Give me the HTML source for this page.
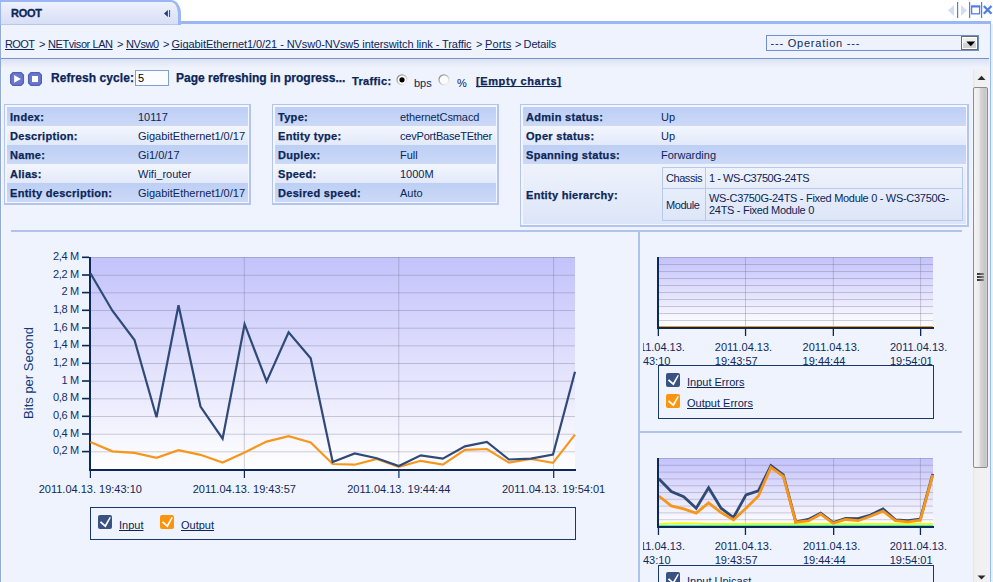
<!DOCTYPE html>
<html><head><meta charset="utf-8">
<style>
*{margin:0;padding:0;box-sizing:border-box}
html,body{width:993px;height:582px;overflow:hidden;background:#fff}
body{position:relative;font-family:"Liberation Sans",sans-serif;font-size:11px;color:#0b2658}
.a{position:absolute;white-space:nowrap}
.u{text-decoration:underline;text-decoration-skip-ink:none}
#panel{position:absolute;left:0;top:21px;width:991px;height:561px;border-top:3px solid #9bb7f3;border-left:1px solid #8fa8d8;border-right:1px solid #99b8fa;background:#eff3fd}
#tab{position:absolute;left:0;top:0;width:181px;height:25px;border-top:2px solid #9bb7f3;border-left:1px solid #9bb7f3;border-right:3px solid #9bb7f3;border-top-right-radius:10px 14px;background:linear-gradient(#eef2fc,#d6def6);z-index:2}
#tab:after{content:"";position:absolute;left:0;right:0;bottom:0;height:1px;background:#b7c8ee}
table.info{position:absolute;border-collapse:separate;border-spacing:0;border-top:1px solid #b3c5ee;border-left:1px solid #b3c5ee;border-right:2px solid #b3c5ee;border-bottom:2px solid #b3c5ee;padding:2px 1px 1px 2px;background:#f3f6fe}
table.info td{height:19px;padding:0 0 0 3px;vertical-align:middle;white-space:nowrap}
table.info td.l{font-weight:bold;letter-spacing:0.3px;-webkit-text-stroke:0.25px #0b2658}
table.info tr.d td{background:linear-gradient(#bdcff5,#ccd9f7)}
table.info tr.e td{background:linear-gradient(#f3f6fe,#e2e9fa)}
table.info tr.f td{background:linear-gradient(#eef2fc,#dce5f8)}
.hl{position:absolute;background:#b0c3ec}

.yl{font-family:"Liberation Sans",sans-serif;font-size:11px;fill:#10306a;letter-spacing:-0.35px}
.xl{font-family:"Liberation Sans",sans-serif;font-size:11px;fill:#0f2a5c}
.yt{font-family:"Liberation Sans",sans-serif;font-size:13px;fill:#0f3a7a}
.leg{position:absolute;border:1px solid #16386c}
.cb{position:absolute;width:14px;height:14px;border-radius:2px}
.cb svg{position:absolute;left:1px;top:1px}
</style></head><body>
<div id="tab">
  <div class="a" style="left:10px;top:5px;font-weight:bold;font-size:11px;color:#0b2658;letter-spacing:-0.3px;-webkit-text-stroke:0.3px #0b2658">ROOT</div>
  <svg class="a" style="left:162px;top:7px" width="8" height="9" viewBox="0 0 8 9"><path d="M1 4.5 L4.9 1 L4.9 8 Z" fill="#1d3f7c"/><rect x="6" y="1" width="1.1" height="7" fill="#3a5a90"/></svg>
</div>
<div id="panel"></div>
<div class="a" style="left:1px;top:24px;width:1px;height:558px;background:#f7f9fe"></div>
<div class="a" style="left:991px;top:24px;width:2px;height:558px;background:#edf1f8"></div>

<!-- window controls -->
<svg class="a" style="left:946px;top:1px" width="47" height="18" viewBox="0 0 47 18">
  <path d="M2 9.5 L8 4 L8 15 Z" fill="#d0ddf8"/>
  <rect x="11" y="1" width="1.2" height="16" fill="#4f7fe6"/>
  <path d="M15 4 L21 9.5 L15 15 Z" fill="#d0ddf8"/>
  <rect x="23" y="1" width="1.2" height="16" fill="#4f7fe6"/>
  <rect x="25.6" y="5.2" width="8" height="7.6" fill="none" stroke="#4f7fe6" stroke-width="1.3"/><rect x="25" y="4.5" width="9.2" height="2" fill="#4f7fe6"/>
  <rect x="35" y="1" width="1.2" height="16" fill="#4f7fe6"/>
  <path d="M37.8 5 L45.5 12.8 M45.5 5 L37.8 12.8" stroke="#4f7fe6" stroke-width="2.3"/>
</svg>

<!-- breadcrumb -->
<div class="a u" style="left:5px;top:38px;letter-spacing:-0.6px">ROOT</div>
<div class="a" style="left:39px;top:38px;letter-spacing:-0.5px">&gt;</div>
<div class="a u" style="left:48px;top:38px;letter-spacing:-0.42px">NETvisor LAN</div>
<div class="a" style="left:117px;top:38px;letter-spacing:-0.5px">&gt;</div>
<div class="a u" style="left:126px;top:38px;letter-spacing:-0.42px">NVsw0</div>
<div class="a" style="left:163px;top:38px;letter-spacing:-0.5px">&gt;</div>
<div class="a u" style="left:171.6px;top:38px;letter-spacing:-0.07px">GigabitEthernet1/0/21 - NVsw0-NVsw5 interswitch link - Traffic</div>
<div class="a" style="left:476px;top:38px;letter-spacing:-0.5px">&gt;</div>
<div class="a u" style="left:485px;top:38px;letter-spacing:0.15px">Ports</div>
<div class="a" style="left:515px;top:38px;letter-spacing:-0.5px">&gt;</div>
<div class="a" style="left:523.6px;top:38px;letter-spacing:-0.15px">Details</div>

<!-- select -->
<div class="a" style="left:766px;top:35px;width:213px;height:16px;border:1px solid #6f8fd0;background:#eef2fc">
  <div class="a" style="left:3.5px;top:1px;font-size:11px;letter-spacing:0.78px;color:#0f2a5c">--- Operation ---</div>
  <div class="a" style="left:194px;top:0px;width:17px;height:14px;border:1px solid #6a6a6a;background:#fff">
    <div class="a" style="left:1px;top:1px;width:13px;height:10px;background:linear-gradient(#f0f0f0 0,#ececec 45%,#d4d4d4 46%,#d0d0d0)"></div>
    <svg class="a" style="left:3.5px;top:4px" width="10" height="6"><path d="M0.3 0.5 L9.2 0.5 L4.75 5.2 Z" fill="#000"/></svg>
  </div>
</div>

<div class="hl" style="left:1px;top:58px;width:988px;height:1px;background:#7a92cc"></div>
<div class="a" style="left:1px;top:59px;width:988px;height:9px;background:linear-gradient(#dbe2f1,#eff3fd)"></div>

<!-- toolbar -->
<svg class="a" style="left:10px;top:72px" width="32" height="14" viewBox="0 0 32 14">
  <path d="M3 0.6 H11 L13.4 3 V11 L11 13.4 H3 L0.6 11 V3 Z" fill="#6a76c8" stroke="#5060bf" stroke-width="1.3"/>
  <path d="M4.1 3 L10.9 7 L4.1 10.7 Z" fill="#fff"/>
  <path d="M21 0.6 H29 L31.4 3 V11 L29 13.4 H21 L18.6 11 V3 Z" fill="#6a76c8" stroke="#5060bf" stroke-width="1.3"/>
  <rect x="22" y="4" width="6" height="6" fill="#fff"/>
</svg>
<div class="a" style="left:51px;top:71px;font-size:12px;font-weight:bold;letter-spacing:0.07px;-webkit-text-stroke:0.25px #0b2658">Refresh cycle:</div>
<div class="a" style="left:135px;top:70px;width:34px;height:16px;border:1px solid #7f9dd8;background:#fbfcff"><div class="a" style="left:2px;top:1px;font-size:11px;color:#000">5</div></div>
<div class="a" style="left:176px;top:71px;font-size:12px;font-weight:bold;letter-spacing:0px;-webkit-text-stroke:0.25px #0b2658">Page refreshing in progress...</div>
<div class="a" style="left:352px;top:75px;font-size:11px;font-weight:bold;letter-spacing:0.35px;-webkit-text-stroke:0.25px #0b2658">Traffic:</div>
<svg class="a" style="left:396px;top:74px" width="12" height="12" viewBox="0 0 12 12"><defs><linearGradient id="rg" x1="0" y1="0" x2="1" y2="1"><stop offset="0" stop-color="#7a7a7a"/><stop offset="0.55" stop-color="#c8c8c8"/><stop offset="1" stop-color="#ffffff"/></linearGradient></defs><circle cx="6" cy="5.8" r="5" fill="#fbfbfb" stroke="url(#rg)" stroke-width="1.2"/><circle cx="6" cy="5.8" r="2.6" fill="#000"/></svg>
<div class="a" style="left:414px;top:77px;font-size:11px">bps</div>
<svg class="a" style="left:438px;top:74px" width="12" height="12" viewBox="0 0 12 12"><circle cx="6" cy="5.8" r="5" fill="#fbfbfb" stroke="url(#rg)" stroke-width="1.2"/></svg>
<div class="a" style="left:457px;top:77px;font-size:11px">%</div>
<div class="a" style="left:476px;top:75px;font-size:11px;font-weight:bold;letter-spacing:0.6px;-webkit-text-stroke:0.25px #0b2658;text-decoration:underline;text-decoration-skip-ink:none">[Empty charts]</div>

<!-- info tables -->
<table class="info" style="left:4px;top:104px;width:247px">
<tr class="d"><td class="l" style="width:128px">Index:</td><td>10117</td></tr>
<tr class="e"><td class="l">Description:</td><td>GigabitEthernet1/0/17</td></tr>
<tr class="d"><td class="l">Name:</td><td>Gi1/0/17</td></tr>
<tr class="e"><td class="l">Alias:</td><td>Wifi_router</td></tr>
<tr class="d"><td class="l">Entity description:</td><td>GigabitEthernet1/0/17</td></tr>
</table>
<table class="info" style="left:272px;top:104px;width:227px">
<tr class="d"><td class="l" style="width:122px">Type:</td><td style="letter-spacing:-0.1px">ethernetCsmacd</td></tr>
<tr class="e"><td class="l">Entity type:</td><td style="letter-spacing:-0.2px">cevPortBaseTEther</td></tr>
<tr class="d"><td class="l">Duplex:</td><td>Full</td></tr>
<tr class="e"><td class="l">Speed:</td><td>1000M</td></tr>
<tr class="d"><td class="l">Desired speed:</td><td>Auto</td></tr>
</table>
<table class="info" style="left:520px;top:104px;width:449px">
<tr class="d"><td class="l" style="width:135px">Admin status:</td><td>Up</td></tr>
<tr class="e"><td class="l">Oper status:</td><td>Up</td></tr>
<tr class="d"><td class="l">Spanning status:</td><td>Forwarding</td></tr>
<tr class="f"><td class="l" style="height:60px;padding-top:2px">Entity hierarchy:</td><td></td></tr>
</table>
<div class="a" style="left:662px;top:167px;width:301px;height:54px;border:1px solid #b7c9ee;background:linear-gradient(#eef2fc,#dde6f8)">
  <div class="a" style="left:42px;top:0;width:1px;height:52px;background:#b7c9ee"></div>
  <div class="a" style="left:0;top:20px;width:299px;height:1px;background:#b7c9ee"></div>
  <div class="a" style="left:3px;top:4px;letter-spacing:-0.45px">Chassis</div>
  <div class="a" style="left:46px;top:4px;letter-spacing:-0.45px">1 - WS-C3750G-24TS</div>
  <div class="a" style="left:3px;top:31px;letter-spacing:-0.45px">Module</div>
  <div class="a" style="left:46px;top:24px;letter-spacing:-0.3px">WS-C3750G-24TS - Fixed Module 0 - WS-C3750G-</div>
  <div class="a" style="left:46px;top:36px;letter-spacing:-0.3px">24TS - Fixed Module 0</div>
</div>

<div class="hl" style="left:11px;top:230px;width:951px;height:2px"></div>
<div class="hl" style="left:638px;top:232px;width:2px;height:350px"></div>
<div class="hl" style="left:640px;top:431px;width:322px;height:2px"></div>


<svg class="a" style="left:0;top:232px" width="638" height="350" viewBox="0 232 638 350">
<defs><linearGradient id="pg" x1="0" y1="0" x2="0" y2="1"><stop offset="0" stop-color="#c3c2fb"/><stop offset="1" stop-color="#ffffff"/></linearGradient></defs>
<rect x="90" y="257" width="485" height="212" fill="url(#pg)"/>
<rect x="90" y="257" width="485" height="1" fill="#6e6a86" fill-opacity="0.32"/>
<rect x="90" y="274.7" width="485" height="1" fill="#6e6a86" fill-opacity="0.32"/>
<rect x="90" y="292.3" width="485" height="1" fill="#6e6a86" fill-opacity="0.32"/>
<rect x="90" y="310" width="485" height="1" fill="#6e6a86" fill-opacity="0.32"/>
<rect x="90" y="327.7" width="485" height="1" fill="#6e6a86" fill-opacity="0.32"/>
<rect x="90" y="345.3" width="485" height="1" fill="#6e6a86" fill-opacity="0.32"/>
<rect x="90" y="363" width="485" height="1" fill="#6e6a86" fill-opacity="0.32"/>
<rect x="90" y="380.7" width="485" height="1" fill="#6e6a86" fill-opacity="0.32"/>
<rect x="90" y="398.3" width="485" height="1" fill="#6e6a86" fill-opacity="0.32"/>
<rect x="90" y="416" width="485" height="1" fill="#6e6a86" fill-opacity="0.32"/>
<rect x="90" y="433.7" width="485" height="1" fill="#6e6a86" fill-opacity="0.32"/>
<rect x="90" y="451.3" width="485" height="1" fill="#6e6a86" fill-opacity="0.32"/>
<rect x="243.8" y="257" width="1" height="212" fill="#6e6a86" fill-opacity="0.32"/>
<rect x="398.3" y="257" width="1" height="212" fill="#6e6a86" fill-opacity="0.32"/>
<rect x="553.1" y="257" width="1" height="212" fill="#6e6a86" fill-opacity="0.32"/>
<rect x="89" y="257" width="2" height="214" fill="#0c2858"/>
<rect x="89" y="469" width="487" height="2" fill="#0c2858"/>
<rect x="82" y="256.5" width="7" height="1.6" fill="#0c2858"/>
<text x="78.8" y="260" text-anchor="end" class="yl">2,4 M</text>
<rect x="82" y="274.2" width="7" height="1.6" fill="#0c2858"/>
<text x="78.8" y="277.7" text-anchor="end" class="yl">2,2 M</text>
<rect x="82" y="291.8" width="7" height="1.6" fill="#0c2858"/>
<text x="78.8" y="295.3" text-anchor="end" class="yl">2 M</text>
<rect x="82" y="309.5" width="7" height="1.6" fill="#0c2858"/>
<text x="78.8" y="313" text-anchor="end" class="yl">1,8 M</text>
<rect x="82" y="327.2" width="7" height="1.6" fill="#0c2858"/>
<text x="78.8" y="330.7" text-anchor="end" class="yl">1,6 M</text>
<rect x="82" y="344.8" width="7" height="1.6" fill="#0c2858"/>
<text x="78.8" y="348.3" text-anchor="end" class="yl">1,4 M</text>
<rect x="82" y="362.5" width="7" height="1.6" fill="#0c2858"/>
<text x="78.8" y="366" text-anchor="end" class="yl">1,2 M</text>
<rect x="82" y="380.2" width="7" height="1.6" fill="#0c2858"/>
<text x="78.8" y="383.7" text-anchor="end" class="yl">1 M</text>
<rect x="82" y="397.8" width="7" height="1.6" fill="#0c2858"/>
<text x="78.8" y="401.3" text-anchor="end" class="yl">0,8 M</text>
<rect x="82" y="415.5" width="7" height="1.6" fill="#0c2858"/>
<text x="78.8" y="419" text-anchor="end" class="yl">0,6 M</text>
<rect x="82" y="433.2" width="7" height="1.6" fill="#0c2858"/>
<text x="78.8" y="436.7" text-anchor="end" class="yl">0,4 M</text>
<rect x="82" y="450.8" width="7" height="1.6" fill="#0c2858"/>
<text x="78.8" y="454.3" text-anchor="end" class="yl">0,2 M</text>
<rect x="89.8" y="471" width="1.2" height="7" fill="#0c2858"/>
<text x="90.3" y="492.8" text-anchor="middle" class="xl">2011.04.13. 19:43:10</text>
<rect x="243.8" y="471" width="1.2" height="7" fill="#0c2858"/>
<text x="244.3" y="492.8" text-anchor="middle" class="xl">2011.04.13. 19:43:57</text>
<rect x="398.3" y="471" width="1.2" height="7" fill="#0c2858"/>
<text x="398.8" y="492.8" text-anchor="middle" class="xl">2011.04.13. 19:44:44</text>
<rect x="553.1" y="471" width="1.2" height="7" fill="#0c2858"/>
<text x="553.6" y="492.8" text-anchor="middle" class="xl">2011.04.13. 19:54:01</text>
<polyline points="90.4,442 112.4,451.3 134.5,452.9 156.5,457.9 178.5,450.2 200.5,454.8 222.6,462.5 244.6,452.5 266.6,441.6 288.6,436.2 310.7,442.4 332.7,464 354.7,464.7 376.8,459 398.8,466.8 420.8,460.8 442.8,464.7 464.9,449.8 486.9,449 508.9,462.6 530.9,459 553,462.9 575,434.6" fill="none" stroke="#f7961c" stroke-width="2.2" stroke-linejoin="miter"/>
<polyline points="90.4,273.2 112.4,310.7 134.5,340 156.5,417.3 178.5,305.3 200.5,406.5 222.6,438.6 244.6,324.2 266.6,381.4 288.6,332.3 310.7,358.2 332.7,462 354.7,453.5 376.8,458.2 398.8,466 420.8,455.3 442.8,458.7 464.9,446.4 486.9,442 508.9,459.5 530.9,458.7 553,454.5 575,371.8" fill="none" stroke="#2f4a78" stroke-width="2.2" stroke-linejoin="miter"/>
<text x="33" y="373" transform="rotate(-90 33 373)" text-anchor="middle" class="yt">Bits per Second</text>
</svg>
<div class="leg" style="left:90px;top:507px;width:486px;height:33px"></div>
<div class="cb" style="left:98px;top:515px;background:#3a5282"><svg width="12" height="12" viewBox="0 0 12 12"><path d="M0.8 6.6 L2.1 5.2 L6 8.7 L10.7 0.9 L11.9 1.6 L6.6 11.4 Z" fill="#fff"/></svg></div>
<div class="a u" style="left:119px;top:519px">Input</div>
<div class="cb" style="left:160px;top:515px;background:#fd940d"><svg width="12" height="12" viewBox="0 0 12 12"><path d="M0.8 6.6 L2.1 5.2 L6 8.7 L10.7 0.9 L11.9 1.6 L6.6 11.4 Z" fill="#fff"/></svg></div>
<div class="a u" style="left:181px;top:519px">Output</div>

<div class="a" style="left:641px;top:232px;width:330px;height:350px;overflow:hidden">
</div>
<svg class="a" style="left:643px;top:232px" width="329" height="350" viewBox="643 232 329 350">
<defs><linearGradient id="pg2" x1="0" y1="0" x2="0" y2="1"><stop offset="0" stop-color="#c3c2fb"/><stop offset="1" stop-color="#ffffff"/></linearGradient></defs>
<rect x="657" y="257" width="276" height="70" fill="url(#pg2)"/>
<rect x="657" y="257" width="276" height="1" fill="#6e6a86" fill-opacity="0.32"/>
<rect x="657" y="264" width="276" height="1" fill="#6e6a86" fill-opacity="0.32"/>
<rect x="657" y="271" width="276" height="1" fill="#6e6a86" fill-opacity="0.32"/>
<rect x="657" y="278" width="276" height="1" fill="#6e6a86" fill-opacity="0.32"/>
<rect x="657" y="285" width="276" height="1" fill="#6e6a86" fill-opacity="0.32"/>
<rect x="657" y="292" width="276" height="1" fill="#6e6a86" fill-opacity="0.32"/>
<rect x="657" y="299" width="276" height="1" fill="#6e6a86" fill-opacity="0.32"/>
<rect x="657" y="306" width="276" height="1" fill="#6e6a86" fill-opacity="0.32"/>
<rect x="657" y="313" width="276" height="1" fill="#6e6a86" fill-opacity="0.32"/>
<rect x="657" y="320" width="276" height="1" fill="#6e6a86" fill-opacity="0.32"/>
<rect x="745" y="257" width="1" height="70" fill="#6e6a86" fill-opacity="0.32"/>
<rect x="832.8" y="257" width="1" height="70" fill="#6e6a86" fill-opacity="0.32"/>
<rect x="920.1" y="257" width="1" height="70" fill="#6e6a86" fill-opacity="0.32"/>
<polyline points="658.8,326.6 671.3,326.6 683.7,326.6 696.2,326.6 708.6,326.6 721.1,326.6 733.5,326.6 746,326.6 758.4,326.6 770.9,326.6 783.3,326.6 795.8,326.6 808.3,326.6 820.7,326.6 833.2,326.6 845.6,326.6 858.1,326.6 870.5,326.6 883,326.6 895.4,326.6 907.9,326.6 920.3,326.6 932.8,326.6" fill="none" stroke="#f7961c" stroke-width="1.4"/>
<rect x="657" y="257" width="2" height="72" fill="#0c2858"/>
<rect x="657" y="327" width="277" height="2" fill="#0c2858"/>
<rect x="657.7" y="329" width="1.3" height="7" fill="#0c2858"/>
<text x="627.6" y="350.6" class="xl">2011.04.13.</text>
<text x="627.6" y="365" class="xl">19:43:10</text>
<rect x="744.9" y="329" width="1.3" height="7" fill="#0c2858"/>
<text x="714.8" y="350.6" class="xl">2011.04.13.</text>
<text x="714.8" y="365" class="xl">19:43:57</text>
<rect x="832.7" y="329" width="1.3" height="7" fill="#0c2858"/>
<text x="802.6" y="350.6" class="xl">2011.04.13.</text>
<text x="802.6" y="365" class="xl">19:44:44</text>
<rect x="920" y="329" width="1.3" height="7" fill="#0c2858"/>
<text x="889.9" y="350.6" class="xl">2011.04.13.</text>
<text x="889.9" y="365" class="xl">19:54:01</text>
<rect x="657" y="458" width="276" height="68" fill="url(#pg2)"/>
<rect x="657" y="458" width="276" height="1" fill="#6e6a86" fill-opacity="0.32"/>
<rect x="657" y="464.8" width="276" height="1" fill="#6e6a86" fill-opacity="0.32"/>
<rect x="657" y="471.6" width="276" height="1" fill="#6e6a86" fill-opacity="0.32"/>
<rect x="657" y="478.4" width="276" height="1" fill="#6e6a86" fill-opacity="0.32"/>
<rect x="657" y="485.2" width="276" height="1" fill="#6e6a86" fill-opacity="0.32"/>
<rect x="657" y="492" width="276" height="1" fill="#6e6a86" fill-opacity="0.32"/>
<rect x="657" y="498.8" width="276" height="1" fill="#6e6a86" fill-opacity="0.32"/>
<rect x="657" y="505.6" width="276" height="1" fill="#6e6a86" fill-opacity="0.32"/>
<rect x="657" y="512.4" width="276" height="1" fill="#6e6a86" fill-opacity="0.32"/>
<rect x="657" y="519.2" width="276" height="1" fill="#6e6a86" fill-opacity="0.32"/>
<rect x="744.9" y="458" width="1" height="68" fill="#6e6a86" fill-opacity="0.32"/>
<rect x="833.1" y="458" width="1" height="68" fill="#6e6a86" fill-opacity="0.32"/>
<rect x="919.9" y="458" width="1" height="68" fill="#6e6a86" fill-opacity="0.32"/>
<polyline points="658.8,525.6 671.3,525.6 683.7,525.6 696.2,525.6 708.6,525.6 721.1,525.6 733.5,525.6 746,525.6 758.4,525.6 770.9,525.6 783.3,525.6 795.8,525.6 808.3,525.6 820.7,525.6 833.2,525.6 845.6,525.6 858.1,525.6 870.5,525.6 883,525.6 895.4,525.6 907.9,525.6 920.3,525.6 932.8,525.6" fill="none" stroke="#20f0f0" stroke-width="1.2"/>
<polyline points="658.8,524 671.3,523.6 683.7,523.2 696.2,523.6 708.6,524 721.1,524 733.5,524 746,524 758.4,524 770.9,524 783.3,524 795.8,524 808.3,524 820.7,524 833.2,524 845.6,524 858.1,524 870.5,524 883,524 895.4,524 907.9,524 920.3,524 932.8,524" fill="none" stroke="#f8f800" stroke-width="2"/>
<polyline points="658.8,478.7 671.3,491.5 683.7,496.8 696.2,508.2 708.6,487.8 721.1,508.2 733.5,517.5 746,494.9 758.4,490.8 770.9,465.6 783.3,474.9 795.8,521.8 808.3,519.5 820.7,513.1 833.2,522.5 845.6,518.3 858.1,518.7 870.5,515 883,508.9 895.4,519.8 907.9,520.7 920.3,519.2 932.8,473.9" fill="none" stroke="#2f4a78" stroke-width="2.8"/>
<polyline points="658.8,496 671.3,505.9 683.7,508.9 696.2,513.1 708.6,502.9 721.1,512.7 733.5,519.8 746,508.2 758.4,496 770.9,467.4 783.3,476.4 795.8,522.2 808.3,521 820.7,514.2 833.2,523.3 845.6,519.5 858.1,520.7 870.5,516.2 883,511.2 895.4,520.7 907.9,521.8 920.3,520.2 932.8,474.9" fill="none" stroke="#f7961c" stroke-width="2.8"/>
<rect x="657" y="458" width="2" height="70" fill="#0c2858"/>
<rect x="657" y="526" width="277" height="2" fill="#0c2858"/>
<rect x="657.8" y="528" width="1.3" height="7" fill="#0c2858"/>
<text x="627.7" y="549.6" class="xl">2011.04.13.</text>
<text x="627.7" y="564" class="xl">19:43:10</text>
<rect x="744.8" y="528" width="1.3" height="7" fill="#0c2858"/>
<text x="714.7" y="549.6" class="xl">2011.04.13.</text>
<text x="714.7" y="564" class="xl">19:43:57</text>
<rect x="833" y="528" width="1.3" height="7" fill="#0c2858"/>
<text x="802.9" y="549.6" class="xl">2011.04.13.</text>
<text x="802.9" y="564" class="xl">19:44:44</text>
<rect x="919.8" y="528" width="1.3" height="7" fill="#0c2858"/>
<text x="889.7" y="549.6" class="xl">2011.04.13.</text>
<text x="889.7" y="564" class="xl">19:54:01</text>
</svg>
<div class="leg" style="left:658px;top:365px;width:276px;height:54px"></div>
<div class="cb" style="left:666px;top:373px;background:#3a5282"><svg width="12" height="12" viewBox="0 0 12 12"><path d="M0.8 6.6 L2.1 5.2 L6 8.7 L10.7 0.9 L11.9 1.6 L6.6 11.4 Z" fill="#fff"/></svg></div>
<div class="a u" style="left:687px;top:376px">Input Errors</div>
<div class="cb" style="left:666px;top:394px;background:#fd940d"><svg width="12" height="12" viewBox="0 0 12 12"><path d="M0.8 6.6 L2.1 5.2 L6 8.7 L10.7 0.9 L11.9 1.6 L6.6 11.4 Z" fill="#fff"/></svg></div>
<div class="a u" style="left:687px;top:397px">Output Errors</div>

<div class="leg" style="left:658px;top:565px;width:276px;height:40px"></div>
<div class="cb" style="left:666px;top:572px;background:#3a5282"><svg width="12" height="12" viewBox="0 0 12 12"><path d="M0.8 6.6 L2.1 5.2 L6 8.7 L10.7 0.9 L11.9 1.6 L6.6 11.4 Z" fill="#fff"/></svg></div>
<div class="a u" style="left:687px;top:575px">Input Unicast</div>

<!-- scrollbar -->
<div class="a" style="left:973px;top:69px;width:16px;height:513px;background:linear-gradient(90deg,#e6e6e6 0,#f0f0f0 2px,#f2f2f2 100%)"></div>
<svg class="a" style="left:977px;top:75px" width="9" height="6"><path d="M0.5 5 L4.5 0.8 L8.5 5 Z" fill="#2a2a2a"/></svg>
<svg class="a" style="left:977px;top:575px" width="9" height="6"><path d="M0.5 0.5 L8.5 0.5 L4.5 4.5 Z" fill="#2a2a2a"/></svg>
<div class="a" style="left:973px;top:87px;width:15px;height:381px;border:1px solid #8c8c8c;border-radius:2px;background:linear-gradient(90deg,#f4f4f4 0,#ebebeb 40%,#d6d6d8 48%,#c6c6ca 88%,#d8d8d8 100%)"></div>
<div class="a" style="left:977px;top:273px;width:7px;height:2px;background:linear-gradient(90deg,#2a2a2a,#8a8a8a)"></div>
<div class="a" style="left:977px;top:276px;width:7px;height:2px;background:linear-gradient(90deg,#2a2a2a,#8a8a8a)"></div>
<div class="a" style="left:977px;top:279px;width:7px;height:2px;background:linear-gradient(90deg,#2a2a2a,#8a8a8a)"></div>
</body></html>
